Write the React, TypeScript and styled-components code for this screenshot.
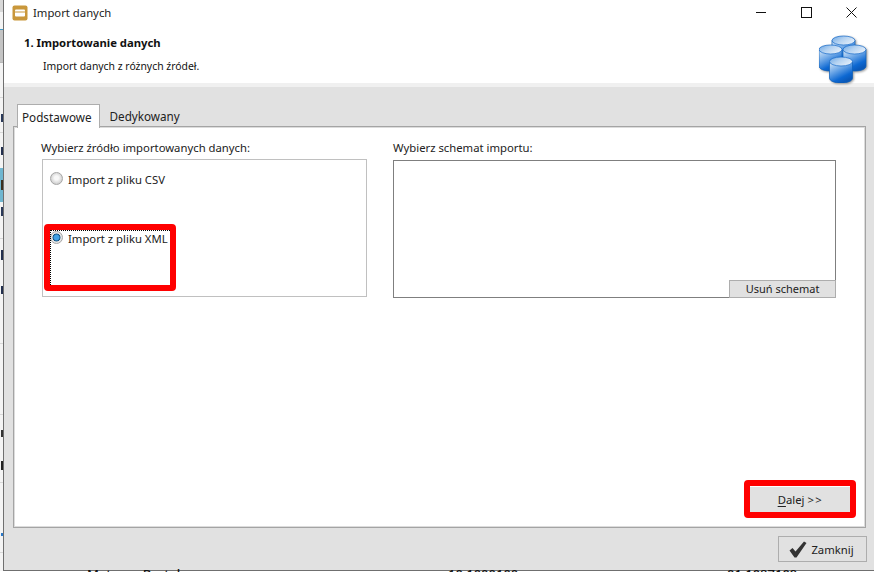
import React from "react";
import styled, { createGlobalStyle } from "styled-components";

const Global = createGlobalStyle`
  html, body { margin: 0; padding: 0; background: #fff; overflow: hidden; }
  #root { width: 874px; height: 572px; }
`;

const Page = styled.div`
  position: relative;
  width: 874px;
  height: 572px;
  overflow: hidden;
  background: #fff;
  font-family: "Noto Sans", "Open Sans", sans-serif;
  font-size: 12px;
  color: #111;
`;

const Shell = styled.div`
  display: flex;
  height: 571px;
`;

const LeftPeek = styled.div`
  width: 3px;
  flex: none;
  background-color: #f4f4f4;
  background-repeat: no-repeat;
  background-position: right top, left top, left top;
  background-size: 2px 100%, 100% 100%, 100% 35px;
  background-image:
    linear-gradient(
      to bottom,
      transparent 114px,
      #2b3a5a 114px 122px,
      transparent 122px 147px,
      #23304f 147px 155px,
      transparent 155px 180px,
      #3a3020 180px 190px,
      transparent 190px 207px,
      #2b3a5a 207px 216px,
      transparent 216px 250px,
      #23304f 250px 260px,
      transparent 260px 286px,
      #23304f 286px 294px,
      transparent 294px 430px,
      #333 430px 437px,
      transparent 437px 461px,
      #222 461px 470px,
      transparent 470px 533px,
      #2a78c8 533px 536px,
      transparent 536px
    ),
    linear-gradient(
      to bottom,
      #d8d8d8 0 12px,
      #f4f4f4 12px 29px,
      #3f9ac9 29px 30px,
      #c4c4c4 30px 62px,
      #b8b8b8 62px 63px,
      #f4f4f4 63px 97px,
      #d8d8d8 97px 98px,
      #f4f4f4 98px 132px,
      #d8d8d8 132px 133px,
      #f4f4f4 133px 168px,
      #6fb6d0 168px 202px,
      #f4f4f4 202px 238px,
      #d8d8d8 238px 239px,
      #f4f4f4 239px 343px,
      #d8d8d8 343px 344px,
      #f4f4f4 344px 414px,
      #d8d8d8 414px 415px,
      #f4f4f4 415px 482px,
      #d8d8d8 482px 483px,
      #f4f4f4 483px 552px,
      #d8d8d8 552px 553px,
      #f4f4f4 553px
    );
`;

const Window = styled.div`
  flex: 1;
  display: flex;
  flex-direction: column;
  border-left: 1px solid #6f6f6f;
  border-bottom: 1px solid #6f6f6f;
  background: #e1e1e1;
  min-width: 0;
`;

const TitleBar = styled.div`
  height: 25px;
  flex: none;
  background: #fff;
  display: flex;
  align-items: center;
  padding-left: 8px;
`;

const TitleText = styled.span`
  margin-left: 5px;
  font-size: 11.3px;
  color: #222;
`;

const WinControls = styled.div`
  margin-left: auto;
  display: flex;
  align-items: center;
  padding-right: 17px;
  gap: 34px;
`;

const Banner = styled.div`
  height: 58px;
  flex: none;
  background: #fff;
  border-bottom: 4px solid #f0f0f0;
  position: relative;
  padding-left: 20px;
`;

const BannerTitle = styled.div`
  font-size: 11.3px;
  font-weight: 700;
  line-height: 16px;
  margin-top: 10px;
`;

const BannerSub = styled.div`
  font-size: 10.4px;
  line-height: 16px;
  margin-top: 7px;
  padding-left: 19px;
`;

const BannerIcon = styled.svg`
  position: absolute;
  right: 7px;
  top: 10px;
  filter: drop-shadow(1px 1px 1px rgba(0, 0, 0, 0.4));
`;

const Body = styled.div`
  flex: 1;
  padding: 17px 8px 0 9px;
  display: flex;
  flex-direction: column;
`;

const Tabs = styled.div`
  display: flex;
  height: 22px;
  flex: none;
  position: relative;
  z-index: 1;
`;

const Tab = styled.div<{ $active?: boolean }>`
  padding: ${(p) => (p.$active ? "0 7px 0 4px" : "0 10px")};
  margin-left: ${(p) => (p.$active ? "4px" : "0")};
  line-height: 24px;
  height: ${(p) => (p.$active ? "24px" : "22px")};
  box-sizing: border-box;
  background: ${(p) => (p.$active ? "#fff" : "transparent")};
  border: ${(p) => (p.$active ? "1px solid #adadad" : "none")};
  border-bottom: none;
  font-size: 11.7px;
  color: #222;
`;

const Panel = styled.div`
  height: 402px;
  flex: none;
  box-sizing: border-box;
  background: #fff;
  border: 1px solid #a4a4a4;
  box-shadow: inset 1px 1px 0 #dcdcdc, inset -1px -1px 0 #dcdcdc;
  padding: 12px 15px 14px 28px;
  display: flex;
  flex-direction: column;
`;

const Columns = styled.div`
  display: flex;
  gap: 26px;
`;

const LeftCol = styled.div`
  width: 325px;
  flex: none;
`;

const RightCol = styled.div`
  width: 443px;
  flex: none;
`;

const Label = styled.div`
  font-size: 11.3px;
  line-height: 17px;
  color: #222;
`;

const SourceLabel = styled(Label)`
  margin-left: -1px;
`;

const SourceBox = styled.div`
  margin-top: 3px;
  height: 138px;
  box-sizing: border-box;
  border: 1px solid #c0c0c0;
  padding-left: 7px;
`;

const RadioRow = styled.div<{ $gap: number }>`
  display: flex;
  align-items: center;
  height: 20px;
  margin-top: ${(p) => p.$gap}px;
`;

const RadioMark = styled.span<{ $on?: boolean }>`
  width: 13px;
  height: 13px;
  flex: none;
  border-radius: 50%;
  box-sizing: border-box;
  border: 1px solid #a6a6a6;
  background: ${(p) =>
    p.$on
      ? "radial-gradient(circle, #3fa0e4 0 2.4px, #12507f 3.6px, #e4e4e4 4.3px)"
      : "radial-gradient(circle at 50% 45%, #f8f8f8 0 2px, #cfcfcf 6px)"};
  margin-top: -1px;
`;

const RadioText = styled.span`
  margin-left: 5px;
  font-size: 11.3px;
  color: #222;
`;

const SchemaBox = styled.div`
  margin-top: 4px;
  height: 138px;
  box-sizing: border-box;
  border: 1px solid #7f7f7f;
  display: flex;
  justify-content: flex-end;
  align-items: flex-end;
`;

const RemoveButton = styled.div`
  margin: 0 -1px -1px 0;
  width: 107px;
  height: 18px;
  box-sizing: border-box;
  background: #e1e1e1;
  border: 1px solid #adadad;
  text-align: center;
  font-size: 11px;
  line-height: 16px;
  color: #222;
`;

const NextButton = styled.div`
  margin-top: auto;
  align-self: flex-end;
  width: 100px;
  height: 26px;
  box-sizing: border-box;
  padding-left: 1px;
  background: #e1e1e1;
  text-align: center;
  font-size: 11.3px;
  line-height: 25px;
  color: #222;
  & u { text-underline-offset: 2px; }
`;

const Arrows = styled.span`
  letter-spacing: 1.5px;
`;

const Highlight = styled.div<{ $x: number; $y: number; $w: number; $h: number }>`
  position: absolute;
  left: ${(p) => p.$x}px;
  top: ${(p) => p.$y}px;
  width: ${(p) => p.$w}px;
  height: ${(p) => p.$h}px;
  box-sizing: border-box;
  border: 6px solid #ff0000;
  border-radius: 4px;
`;

const FocusRing = styled.div`
  position: absolute;
  left: 50px;
  top: 230px;
  width: 122px;
  height: 57px;
  box-sizing: border-box;
  border: 1px dotted #000;
`;

const Footer = styled.div`
  flex: 1;
  display: flex;
  justify-content: flex-end;
  align-items: flex-start;
  padding-top: 8px;
  margin-right: -1px;
`;

const CloseButton = styled.div`
  width: 89px;
  height: 26px;
  box-sizing: border-box;
  border: 1px solid #adadad;
  padding-right: 2px;
  display: flex;
  align-items: center;
  justify-content: center;
  gap: 4px;
  font-size: 11.3px;
  color: #222;
`;

const BottomPeek = styled.div`
  position: absolute;
  left: 87px;
  right: 0;
  top: 567px;
  height: 5px;
  overflow: hidden;
  display: flex;
  font-size: 13px;
  line-height: 14px;
  font-weight: 500;
  color: #111;
  white-space: nowrap;
`;

const PeekText = styled.span<{ $w: number }>`
  flex: none;
  width: ${(p) => p.$w}px;
`;

const Cyl = ({ x, y }: { x: number; y: number }) => (
  <g transform={`translate(${x} ${y})`}>
    <path
      d="M0 4.500 V21 C0 24 5 26 11.500 26 C18 26 23 24 23 21 V4.500 Z"
      fill="url(#cylBody)"
      stroke="#0d5fb8"
      strokeWidth="0.7"
    />
    <ellipse cx="11.500" cy="4.500" rx="11.500" ry="4.500" fill="url(#cylTop)" stroke="#1468c8" strokeWidth="0.7" />
  </g>
);

const DbIcon = () => (
  <BannerIcon width="48" height="48" viewBox="0 0 48 48">
    <defs>
      <linearGradient id="cylBody" x1="0" y1="0" x2="0.55" y2="1">
        <stop offset="0" stopColor="#dfecf8" />
        <stop offset="0.4" stopColor="#78aee9" />
        <stop offset="0.8" stopColor="#0d68d2" />
        <stop offset="1" stopColor="#0a58b8" />
      </linearGradient>
      <linearGradient id="cylTop" x1="0" y1="0" x2="1" y2="0.6">
        <stop offset="0" stopColor="#6ba6e4" />
        <stop offset="0.5" stopColor="#b4d2f1" />
        <stop offset="1" stopColor="#e2edf9" />
      </linearGradient>
    </defs>
    <Cyl x={13} y={1} />
    <Cyl x={0} y={10} />
    <Cyl x={24} y={10} />
    <Cyl x={10.500} y={22} />
  </BannerIcon>
);

export default function App() {
  return (
    <Page>
      <Global />
      <Shell>
        <LeftPeek />
        <Window>
          <TitleBar>
            <svg width="16" height="16" viewBox="0 0 16 16">
              <rect x="0.500" y="0.500" width="15" height="15" rx="2" fill="#c9973b" />
              <rect x="3" y="4.500" width="10" height="7" rx="1" fill="#fff" />
              <rect x="3" y="6.500" width="10" height="1" fill="#c9973b" />
            </svg>
            <TitleText>Import danych</TitleText>
            <WinControls>
              <svg width="11" height="11" viewBox="0 0 11 11">
                <path d="M0 5.500 H10" stroke="#111" fill="none" />
              </svg>
              <svg width="11" height="11" viewBox="0 0 11 11">
                <rect x="0.500" y="0.500" width="10" height="10" stroke="#111" fill="none" />
              </svg>
              <svg width="11" height="11" viewBox="0 0 11 11">
                <path d="M0.500 0.500 L10.500 10.500 M10.500 0.500 L0.500 10.500" stroke="#111" fill="none" />
              </svg>
            </WinControls>
          </TitleBar>
          <Banner>
            <BannerTitle>1. Importowanie danych</BannerTitle>
            <BannerSub>Import danych z różnych źródeł.</BannerSub>
            <DbIcon />
          </Banner>
          <Body>
            <Tabs>
              <Tab $active>Podstawowe</Tab>
              <Tab>Dedykowany</Tab>
            </Tabs>
            <Panel>
              <Columns>
                <LeftCol>
                  <SourceLabel>Wybierz źródło importowanych danych:</SourceLabel>
                  <SourceBox>
                    <RadioRow $gap={9}>
                      <RadioMark />
                      <RadioText>Import z pliku CSV</RadioText>
                    </RadioRow>
                    <RadioRow $gap={39}>
                      <RadioMark $on />
                      <RadioText>Import z pliku XML</RadioText>
                    </RadioRow>
                  </SourceBox>
                </LeftCol>
                <RightCol>
                  <Label>Wybierz schemat importu:</Label>
                  <SchemaBox>
                    <RemoveButton>Usuń schemat</RemoveButton>
                  </SchemaBox>
                </RightCol>
              </Columns>
              <NextButton>
                <u>D</u>alej <Arrows>&gt;&gt;</Arrows>
              </NextButton>
            </Panel>
            <Footer>
              <CloseButton>
                <svg width="18" height="17" viewBox="0 0 18 17">
                  <path d="M0.500 9.500 L3.500 7 L6.500 10.500 L15 0.500 L17.500 2 L7.500 16.500 H5.500 Z" fill="#333" />
                </svg>
                Zamknij
              </CloseButton>
            </Footer>
          </Body>
        </Window>
      </Shell>
      <BottomPeek>
        <PeekText $w={361}>Mateusz Bartek</PeekText>
        <PeekText $w={149}>10 1000100</PeekText>
        <PeekText $w={130}>gram</PeekText>
        <PeekText $w={100}>01 1087109</PeekText>
      </BottomPeek>
      <FocusRing />
      <Highlight $x={44} $y={224} $w={132} $h={67} />
      <Highlight $x={744} $y={480} $w={112} $h={38} />
    </Page>
  );
}
